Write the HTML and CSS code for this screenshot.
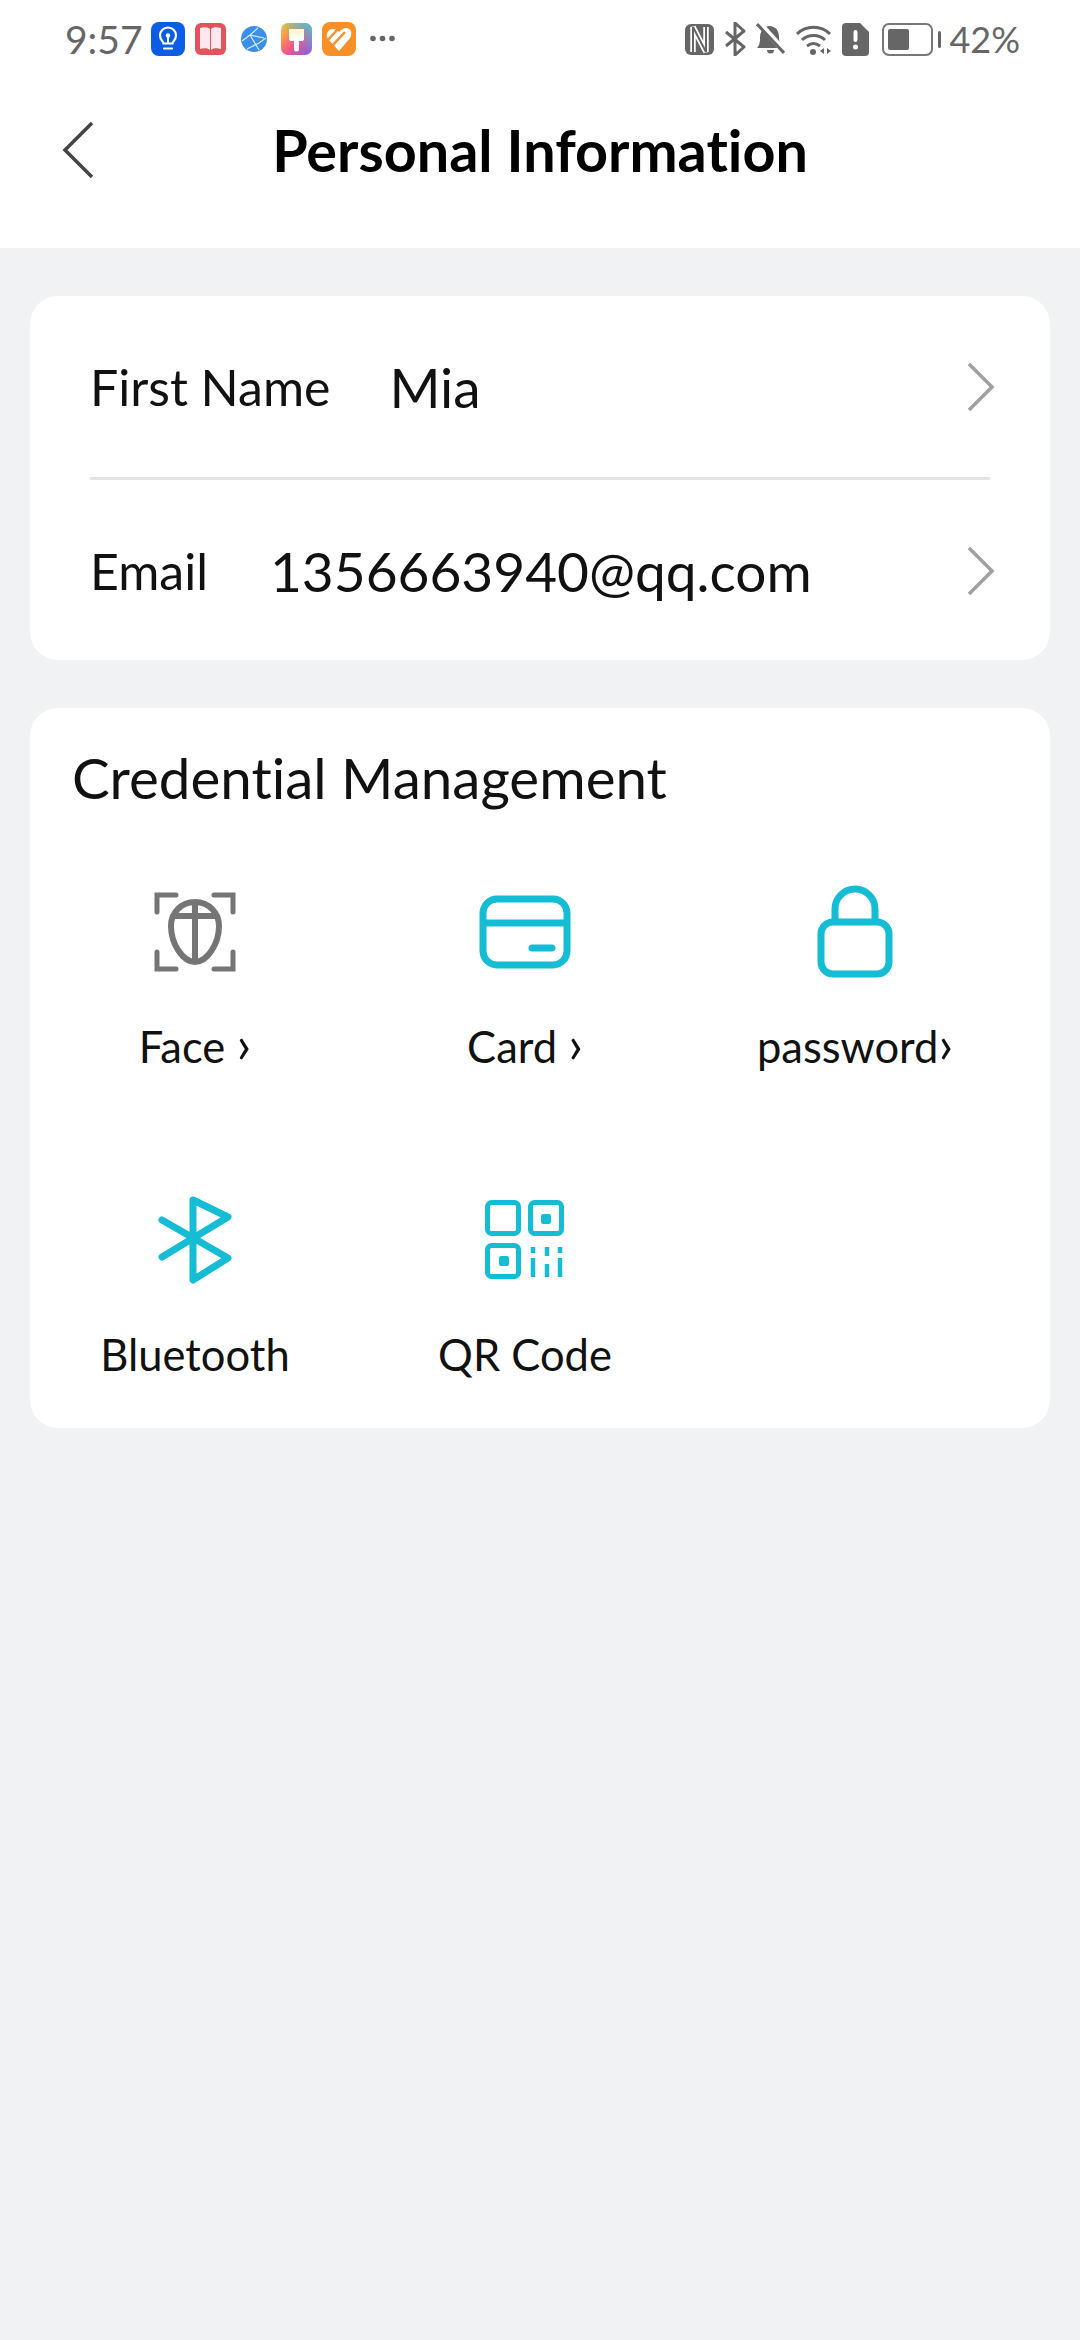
FILE: index.html
```html
<!DOCTYPE html>
<html lang="en">
<head>
  <meta charset="UTF-8">
  <meta name="viewport" content="width=device-width, initial-scale=1.0">
  <title>Personal Information</title>
  <link rel="stylesheet" href="styles.css">
</head>
<body>
  <header class="top">
    <div class="status">
      <span class="time">9:57</span>
      <svg class="app" width="34" height="34" viewBox="0 0 34 34"><rect width="34" height="34" rx="8" fill="#0b5ce6"/><path d="M12.500 21.500c0-2-3.500-3.500-3.500-8a8 8 0 0 1 16 0c0 4.500-3.500 6-3.500 8zM13 26.500h8" fill="none" stroke="#fff" stroke-width="2.200" stroke-linecap="round"/><path d="M17 21v-6" stroke="#fff" stroke-width="2"/><circle cx="17" cy="13.500" r="2.200" fill="#fff"/></svg>
      <svg class="app app-book" width="31" height="32" viewBox="0 0 31 32"><rect width="31" height="32" rx="6" fill="#e2535c"/><path d="M5 5c4-1 8-1 10 1v21c-2-2-6-2-10-1zM26 5c-4-1-8-1-10 1v21c2-2 6-2 10-1z" fill="#fde8ee"/></svg>
      <svg class="app app-globe" width="26" height="26" viewBox="0 0 26 26"><circle cx="13" cy="13" r="13" fill="#3b8fe8"/><path d="M1 15l8-6 8-7M9 9l14 3M9 9l9 15M6 23l12-6 7-5" fill="none" stroke="#d8eafb" stroke-width="1.200"/></svg>
      <svg class="app app-paint" width="31" height="32" viewBox="0 0 31 32"><defs><linearGradient id="paintFill" x1="0" y1="0" x2="1" y2="1"><stop offset="0" stop-color="#f8d21f"/><stop offset=".55" stop-color="#f2568a"/><stop offset="1" stop-color="#7b62f0"/></linearGradient><linearGradient id="paintTop" x1="1" y1="0" x2=".5" y2=".6"><stop offset="0" stop-color="#3cc8d8"/><stop offset="1" stop-color="#3cc8d8" stop-opacity="0"/></linearGradient><linearGradient id="brush" x1="0" y1="0" x2="0" y2="1"><stop offset="0" stop-color="#fff6c8"/><stop offset=".5" stop-color="#fff"/></linearGradient></defs><rect width="31" height="32" rx="7" fill="url(#paintFill)"/><rect width="31" height="32" rx="7" fill="url(#paintTop)"/><path d="M8 6h15v10c0 1.500-1 2-2.500 2H18v8a2.500 2.500 0 0 1-5 0v-8h-2.500C9 18 8 17.500 8 16z" fill="url(#brush)"/></svg>
      <svg class="app app-orange" width="34" height="34" viewBox="0 0 34 34"><rect width="34" height="34" rx="8" fill="#f98f27"/><path d="M17 29L6 17C3 13 6 7 11 7c3 0 5 2 6 3 1-1 4-4 7-4 5 0 7 6 4 10z" fill="#fff"/><path d="M4 20L16 7M9 25L23 10" stroke="#f98f27" stroke-width="2.500"/></svg>
      <svg class="app app-dots" width="25" height="7" viewBox="0 0 25 7"><circle cx="3" cy="3.500" r="2.800" fill="#666"/><circle cx="12.500" cy="3.500" r="2.800" fill="#666"/><circle cx="22" cy="3.500" r="2.800" fill="#666"/></svg>
      <span class="spacer"></span>
      <svg class="sys sys-nfc" width="29" height="31" viewBox="0 0 29 31"><rect width="29" height="31" rx="6" fill="#666"/><path d="M8 28V3l13 25V3" fill="none" stroke="#fff" stroke-width="5.500"/><path d="M8 28V3l13 25V3" fill="none" stroke="#666" stroke-width="2"/></svg>
      <svg class="sys sys-bt" width="22" height="34" viewBox="0 0 22 34"><path d="M2 10l18 15-9 8V1l9 8L2 24" fill="none" stroke="#666" stroke-width="3" stroke-linejoin="round"/></svg>
      <svg class="sys sys-bell" width="29" height="32" viewBox="0 0 29 32"><path d="M1 25c3-3 3-7 3-11 0-6 4-10 9-11 7 0 10 5 10 11 0 4 1 8 5 11zM11 27h7a3.500 3.500 0 0 1-7 0z" fill="#666"/><path d="M3 0l25 28" stroke="#fff" stroke-width="6"/><path d="M1 1l27 29" stroke="#666" stroke-width="3"/></svg>
      <svg class="sys sys-wifi" width="37" height="32" viewBox="0 0 37 32"><path d="M2 11c9-9 24-9 33 0M7 17c6-6 17-6 23 0M12 23c4-3 9-3 13 0" fill="none" stroke="#666" stroke-width="3"/><circle cx="18" cy="29" r="3" fill="#666"/><path d="M29 25v6l-4-3zM32 25v6l4-3z" fill="#666"/></svg>
      <svg class="sys sys-sim" width="27" height="33" viewBox="0 0 27 33"><path d="M4 0h14l9 9v20a4 4 0 0 1-4 4H4a4 4 0 0 1-4-4V4a4 4 0 0 1 4-4z" fill="#666"/><rect x="11.500" y="7" width="4" height="12" rx="2" fill="#fff"/><circle cx="13.500" cy="24" r="2.500" fill="#fff"/></svg>
      <svg class="sys sys-batt" width="59" height="33" viewBox="0 0 59 33"><rect x="1" y="1" width="49" height="31" rx="6" fill="none" stroke="#777" stroke-width="2"/><rect x="6" y="6" width="21" height="21" rx="2" fill="#666"/><rect x="56" y="8" width="3" height="17" rx="1.500" fill="#666"/></svg>
      <span class="pct">42%</span>
    </div>
    <div class="nav">
      <svg class="back" width="32" height="58" viewBox="0 0 32 58"><path d="M30 2L3 29l27 27" fill="none" stroke="#444" stroke-width="3.500"/></svg>
      <h1 class="title">Personal Information</h1>
    </div>
  </header>

  <main class="content">
    <section class="card info">
      <div class="row">
        <span class="row-label">First Name</span>
        <span class="row-value value-name">Mia</span>
        <svg class="arrow" width="30" height="50" viewBox="0 0 30 50"><path d="M3 2l23 23L3 48" fill="none" stroke="#a0a0a0" stroke-width="3.500"/></svg>
      </div>
      <div class="line"></div>
      <div class="row">
        <span class="row-label">Email</span>
        <span class="row-value value-email">1356663940@qq.com</span>
        <svg class="arrow" width="30" height="50" viewBox="0 0 30 50"><path d="M3 2l23 23L3 48" fill="none" stroke="#a0a0a0" stroke-width="3.500"/></svg>
      </div>
    </section>

    <section class="card creds">
      <h2 class="creds-title">Credential Management</h2>
      <div class="grid">
        <div class="item">
          <svg width="100" height="100" viewBox="0 0 100 100"><g fill="none" stroke="#757575" stroke-width="5" stroke-linecap="round"><path d="M12 30V13h19M69 13h19v17M12 70v17h19M69 87h19V70"/><path d="M50 20c14 0 24 11 24 24 0 18-12 36-24 36S26 62 26 44c0-13 10-24 24-24zM50 20v60M28 34h44" stroke-width="6"/></g></svg>
          <span class="item-label">Face <span class="chev">›</span></span>
        </div>
        <div class="item">
          <svg width="100" height="100" viewBox="0 0 100 100"><g fill="none" stroke="#14bcd4" stroke-width="7" stroke-linecap="round"><rect x="8" y="17" width="84" height="66" rx="14"/><path d="M8 41h84" stroke-linecap="butt"/><path d="M57 66h20"/></g></svg>
          <span class="item-label">Card <span class="chev">›</span></span>
        </div>
        <div class="item">
          <svg width="100" height="100" viewBox="0 0 100 100"><g fill="none" stroke="#14bcd4" stroke-width="7"><rect x="16" y="40" width="68" height="52" rx="12"/><path d="M30 40V27a20 20 0 0 1 40 0v13"/></g></svg>
          <span class="item-label">password<span class="chev">›</span></span>
        </div>
        <div class="item">
          <svg width="100" height="100" viewBox="0 0 100 100"><path d="M17 30l66 38-35 22V10l35 17-66 40" fill="none" stroke="#14bcd4" stroke-width="7" stroke-linecap="round" stroke-linejoin="round"/></svg>
          <span class="item-label">Bluetooth</span>
        </div>
        <div class="item">
          <svg width="100" height="100" viewBox="0 0 100 100"><g fill="none" stroke="#14bcd4" stroke-width="5"><rect x="12.500" y="12.500" width="31" height="31" rx="4"/><rect x="55.500" y="12.500" width="31" height="31" rx="4"/><rect x="12.500" y="55.500" width="31" height="31" rx="4"/><path d="M58 57v6M58 68v19M72 57v9M72 74v13M85 57v6M85 68v19" stroke-width="4.500"/></g><rect x="66" y="24" width="10" height="10" rx="2" fill="#14bcd4"/><rect x="24" y="66" width="10" height="10" rx="2" fill="#14bcd4"/></svg>
          <span class="item-label">QR Code</span>
        </div>
      </div>
    </section>
  </main>
</body>
</html>
```

FILE: styles.css
```css
body {
  font-family: Lato, "Noto Sans", Arial, sans-serif;
  font-variant-ligatures: none;
  margin: 0;
  padding: 0;
  width: 1080px;
  height: 2340px;
  background-color: #f1f2f4;
  color: #111;
  overflow: hidden;
}

.top {
  height: 248px;
  background-color: #fff;
}

.status {
  display: flex;
  align-items: center;
  height: 78px;
  padding: 0 60px 0 65px;
  color: #666;
}

.time {
  font-size: 39px;
  width: 86px;
}

.app-book {
  margin-left: 10px;
}

.app-globe {
  margin-left: 15px;
}

.app-paint {
  margin-left: 14px;
}

.app-orange {
  margin-left: 10px;
}

.app-dots {
  margin-left: 14px;
  margin-top: -2px;
}

.spacer {
  flex: 1;
}

.sys {
  margin-left: 10px;
}

.sys-batt {
  margin-left: 13px;
}

.pct {
  font-size: 36px;
  margin-left: 8px;
}

.nav {
  display: flex;
  align-items: center;
  justify-content: center;
  position: relative;
  height: 142px;
  padding-bottom: 6px;
}

.back {
  position: absolute;
  left: 62px;
  top: 43px;
}

.title {
  margin: 0;
  font-size: 57.500px;
  font-weight: 700;
  color: #000;
}

.content {
  display: flex;
  flex-direction: column;
  gap: 48px;
  padding: 48px 30px 0;
}

.card {
  background-color: #fff;
  border-radius: 28px;
}

.info {
  padding: 0 60px;
  height: 364px;
}

.row {
  display: flex;
  align-items: center;
  height: 181px;
}

.row-label {
  font-size: 50px;
}

.row-value {
  font-size: 55px;
}

.value-name {
  margin-left: 59px;
}

.value-email {
  margin-left: 62px;
}

.arrow {
  margin-left: auto;
  margin-right: -6px;
}

.line {
  height: 3px;
  background-color: #e4e4e4;
}

.creds {
  height: 720px;
}

.creds-title {
  margin: 0;
  padding: 39px 0 0 42px;
  font-size: 56.500px;
  font-weight: 400;
  line-height: 60px;
}

.grid {
  display: grid;
  grid-template-columns: repeat(3, 330px);
  grid-auto-rows: 308px;
  margin-top: 75px;
}

.item {
  display: flex;
  flex-direction: column;
  align-items: center;
}

.item-label {
  font-size: 43.500px;
  line-height: 50px;
  margin-top: 39px;
}

.chev {
  font-size: 52px;
  line-height: 40px;
}
```
